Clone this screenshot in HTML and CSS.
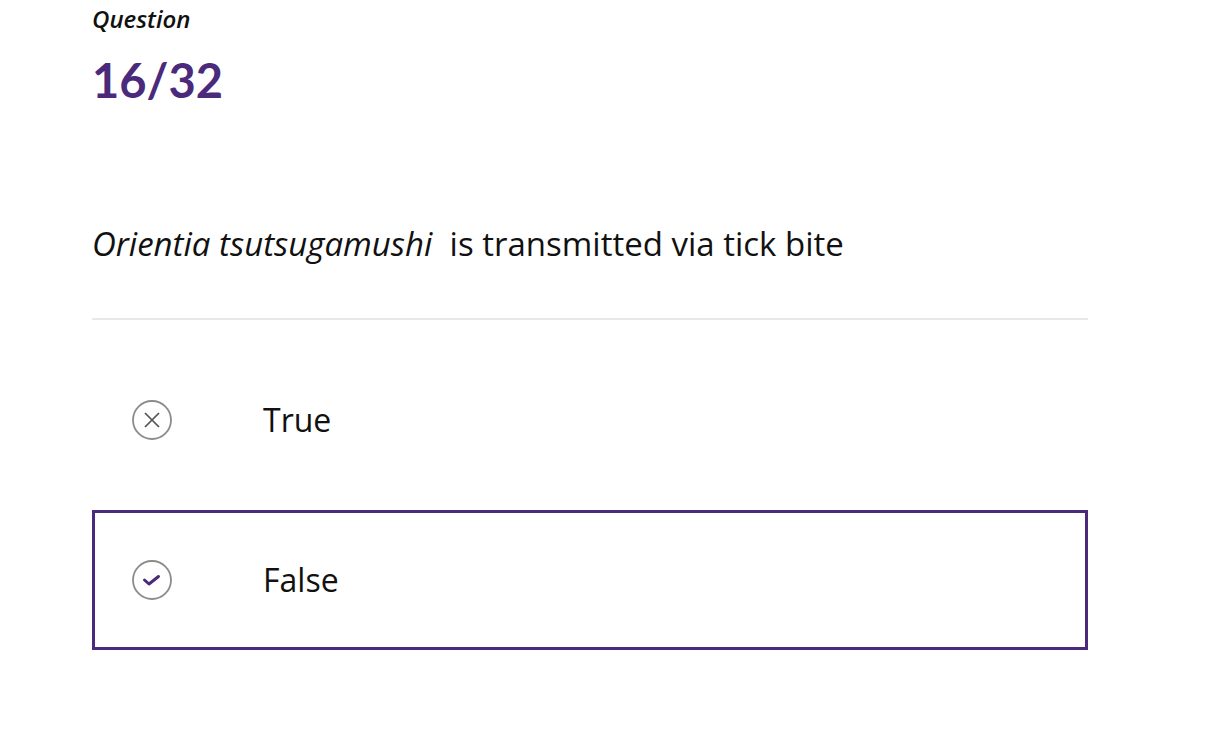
FILE: index.html
```html
<!DOCTYPE html>
<html>
<head>
<meta charset="utf-8">
<link rel="stylesheet" href="styles.css">
</head>
<body>
<main class="quiz">
  <div class="label">Question</div>
  <div class="counter">16/32</div>
  <div class="prompt"><em>Orientia tsutsugamushi</em>&nbsp; is transmitted via tick bite</div>
  <hr class="divider">
  <div class="options">
    <div class="option">
      <span class="icon">
        <svg width="40" height="40" viewBox="0 0 40 40"><circle cx="20" cy="20" r="19" fill="none" stroke="#8c8c8c" stroke-width="1.8"/><path d="M13 13 L27 27 M27 13 L13 27" stroke="#555" stroke-width="1.7" fill="none"/></svg>
      </span>
      <span class="text">True</span>
    </div>
    <div class="option selected">
      <span class="icon">
        <svg width="40" height="40" viewBox="0 0 40 40"><circle cx="20" cy="20" r="19" fill="none" stroke="#8c8c8c" stroke-width="1.8"/><path d="M12.5 20 L17 24 L26.5 16.5" stroke="#4b2a7b" stroke-width="3" fill="none" stroke-linecap="round" stroke-linejoin="round"/></svg>
      </span>
      <span class="text">False</span>
    </div>
  </div>
</main>
</body>
</html>
```
FILE: styles.css
```css
html, body {
  margin: 0;
  padding: 0;
  background: #fff;
}
.quiz {
  width: 996px;
  margin-left: 92px;
  font-family: "Open Sans", "Liberation Sans", sans-serif;
  color: #111;
}
.label {
  font-style: italic;
  font-weight: 600;
  font-size: 24px;
  line-height: 32px;
  padding-top: 3px;
  color: #111;
}
.counter {
  font-family: Lato, "Open Sans", sans-serif;
  font-weight: 700;
  font-size: 47px;
  line-height: 56px;
  margin-top: 17px;
  color: #4b2a7b;
}
.prompt {
  margin-top: 114px;
  font-size: 33px;
  line-height: 44px;
}
.prompt em {
  font-style: italic;
}
.divider {
  border: 0;
  height: 2px;
  background: #e8e8e8;
  margin: 52px 0 0 0;
}
.options {
  margin-top: 30px;
  display: flex;
  flex-direction: column;
  gap: 20px;
}
.option {
  height: 140px;
  box-sizing: border-box;
  border: 3px solid transparent;
  display: flex;
  align-items: center;
  padding-left: 37px;
}
.option.selected {
  border-color: #4b2a7b;
}
.icon {
  width: 40px;
  height: 40px;
  display: flex;
}
.text {
  margin-left: 91px;
  font-size: 32px;
  line-height: 44px;
}
```
